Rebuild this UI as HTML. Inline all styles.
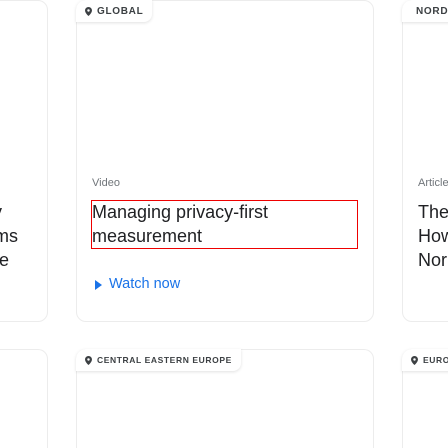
<!DOCTYPE html>
<html><head><style>
*{margin:0;padding:0;box-sizing:border-box}
html,body{width:448px;height:448px;overflow:hidden}
body{background:#fff;font-family:"Liberation Sans",sans-serif;position:relative}
.card{position:absolute;border:1px solid #ececec;border-radius:10px;background:#fff}
.tag{position:absolute;left:0;top:0;height:22px;background:#fff;border-radius:10px 0 8px 0;box-shadow:0 1px 3px rgba(0,0,0,.12);display:flex;align-items:center;padding-left:9px;padding-right:9px;font-weight:bold;color:#3c4043;letter-spacing:.7px;white-space:nowrap}
.tag svg{margin-right:5px}
.t{position:absolute;white-space:nowrap;color:#202124}
.r{position:absolute;white-space:nowrap;color:#202124;font-size:18px;text-align:right}
</style></head><body>
<div class="card" style="left:-60px;top:0;width:108px;height:322px"></div>
<div class="card" style="left:76px;top:0;width:298px;height:322px"></div>
<div class="card" style="left:402px;top:0;width:120px;height:322px"></div>
<div class="tag" style="left:76px;top:0;font-size:10px"><svg width="7" height="9" viewBox="0 0 10 13"><path d="M5 0C2.2 0 0 2.2 0 5c0 3.7 5 8 5 8s5-4.3 5-8c0-2.8-2.2-5-5-5zm0 6.8A1.8 1.8 0 1 1 5 3.2a1.8 1.8 0 0 1 0 3.6z" fill="#3c4043"/></svg>GLOBAL</div>
<div class="tag" style="left:402px;top:0;font-size:10px;width:70px"><svg width="7" height="9" viewBox="0 0 10 13"><path d="M5 0C2.2 0 0 2.2 0 5c0 3.7 5 8 5 8s5-4.3 5-8c0-2.8-2.2-5-5-5zm0 6.8A1.8 1.8 0 1 1 5 3.2a1.8 1.8 0 0 1 0 3.6z" fill="#3c4043"/></svg>NORDICS</div>

<div class="t" style="left:92px;top:177px;font-size:11px;color:#70757a">Video</div>
<div style="position:absolute;left:91px;top:200px;width:267px;height:49px;border:1px solid #e00"></div>
<div class="t" style="left:92px;top:200px;font-size:18px;line-height:24px">Managing privacy-first<br>measurement</div>
<svg style="position:absolute;left:95px;top:280px" width="7" height="10" viewBox="0 0 7 10"><path d="M0 0L7 5 0 10z" fill="#1a73e8"/></svg>
<div class="t" style="left:109px;top:276px;font-size:14.5px;color:#1a73e8">Watch now</div>

<div class="r" style="right:446px;top:200px;line-height:24px">y</div>
<div class="r" style="right:430px;top:224px;line-height:24px">ms</div>
<div class="r" style="right:439px;top:248px;line-height:24px">e</div>
<div class="t" style="left:418px;top:177px;font-size:11px;color:#70757a">Article</div>
<div class="t" style="left:418px;top:200px;font-size:18px;line-height:24px">The<br>How<br>Nor</div>

<div class="card" style="left:-60px;top:349px;width:108px;height:99px;border-bottom:none;border-radius:10px 10px 0 0"></div>
<div class="card" style="left:76px;top:349px;width:298px;height:99px;border-bottom:none;border-radius:10px 10px 0 0"></div>
<div class="card" style="left:402px;top:349px;width:120px;height:99px;border-bottom:none;border-radius:10px 10px 0 0"></div>
<div class="tag" style="left:76px;top:349px;font-size:8.5px;letter-spacing:.6px"><svg width="7" height="9" viewBox="0 0 10 13"><path d="M5 0C2.2 0 0 2.2 0 5c0 3.7 5 8 5 8s5-4.3 5-8c0-2.8-2.2-5-5-5zm0 6.8A1.8 1.8 0 1 1 5 3.2a1.8 1.8 0 0 1 0 3.6z" fill="#3c4043"/></svg>CENTRAL EASTERN EUROPE</div>
<div class="tag" style="left:402px;top:349px;font-size:8.5px;letter-spacing:.6px"><svg width="7" height="9" viewBox="0 0 10 13"><path d="M5 0C2.2 0 0 2.2 0 5c0 3.7 5 8 5 8s5-4.3 5-8c0-2.8-2.2-5-5-5zm0 6.8A1.8 1.8 0 1 1 5 3.2a1.8 1.8 0 0 1 0 3.6z" fill="#3c4043"/></svg>EUROPE</div>
</body></html>
